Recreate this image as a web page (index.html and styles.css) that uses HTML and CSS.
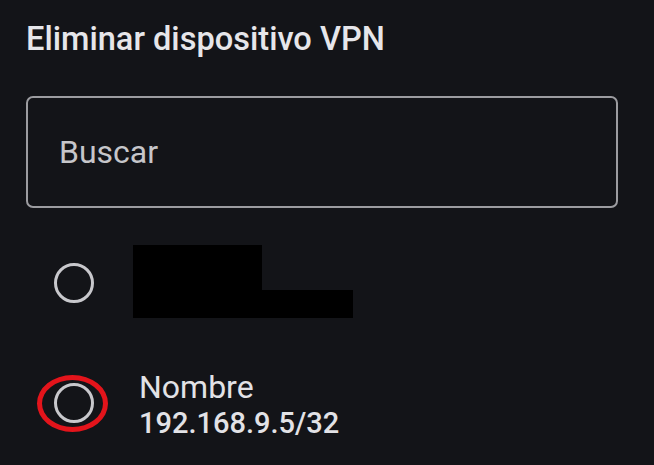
FILE: index.html
```html
<!DOCTYPE html>
<html lang="es">
<head>
<meta charset="utf-8">
<title>Eliminar dispositivo VPN</title>
<link rel="stylesheet" href="styles.css">
</head>
<body>
<main class="dialog">
  <h1 class="title">Eliminar dispositivo VPN</h1>
  <div class="search">
    <span class="search-placeholder">Buscar</span>
  </div>
  <ul class="list">
    <li class="row">
      <span class="radio-wrap"><span class="radio"></span></span>
      <div class="redacted">
        <div class="redacted-top"></div>
        <div class="redacted-bottom"></div>
      </div>
    </li>
    <li class="row">
      <span class="radio-wrap"><span class="radio"></span><span class="highlight"></span></span>
      <div class="item-text">
        <div class="item-name">Nombre</div>
        <div class="item-ip">192.168.9.5/32</div>
      </div>
    </li>
  </ul>
</main>
</body>
</html>
```

FILE: styles.css
```css
html, body {
  margin: 0;
  padding: 0;
  background: #131418;
}
body {
  width: 654px;
  height: 465px;
  overflow: hidden;
  font-family: Roboto, "Noto Sans", "Liberation Sans", sans-serif;
}
.dialog {
  padding: 20px 36px 0 26px;
}
.title {
  margin: 0;
  font-size: 32.6px;
  line-height: 38px;
  font-weight: 500;
  color: #e6e6ea;
}
.search {
  margin-top: 38px;
  height: 112px;
  box-sizing: border-box;
  border: 2px solid #9c9ca0;
  border-radius: 7px;
  display: flex;
  align-items: center;
  padding-left: 31px;
}
.search-placeholder {
  font-size: 32px;
  line-height: 38px;
  color: #c6c6ca;
}
.list {
  list-style: none;
  margin: 0;
  padding: 0;
}
.row {
  display: flex;
  align-items: center;
  gap: 39px;
  height: 120px;
  padding-left: 28px;
}
.row:first-child {
  margin-top: 15px;
}
.radio-wrap {
  position: relative;
  width: 40px;
  height: 40px;
  flex: none;
}
.radio {
  display: block;
  width: 40px;
  height: 40px;
  box-sizing: border-box;
  border: 3.5px solid #c8c8cc;
  border-radius: 50%;
}
.highlight {
  position: absolute;
  left: -17px;
  top: -8px;
  width: 71px;
  height: 57px;
  box-sizing: border-box;
  border: 5.5px solid #e3141b;
  border-radius: 50%;
}
.redacted {
  display: flex;
  flex-direction: column;
  margin-top: -4px;
}
.redacted-top {
  width: 129px;
  height: 45px;
  background: #000;
}
.redacted-bottom {
  width: 220px;
  height: 28px;
  background: #000;
}
.item-text {
  padding-left: 6px;
  margin-top: 4px;
}
.item-name {
  font-size: 32px;
  line-height: 36px;
  color: #e2e2e6;
}
.item-ip {
  font-size: 29px;
  line-height: 36px;
  font-weight: 500;
  color: #e2e2e6;
}
```
